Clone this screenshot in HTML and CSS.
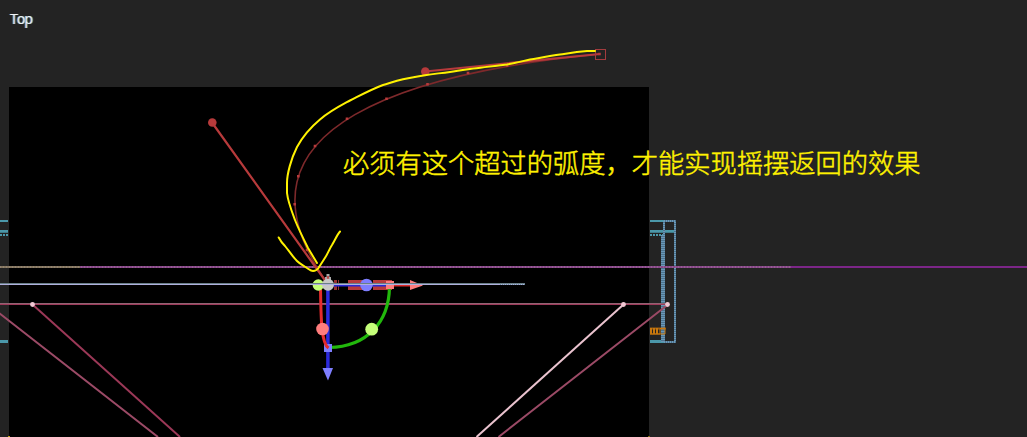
FILE: index.html
```html
<!DOCTYPE html>
<html lang="zh-CN">
<head>
<meta charset="utf-8">
<title>Top</title>
<link rel="stylesheet" href="styles.css">
</head>
<body>
<main class="viewport">
<svg class="scene" width="1027" height="437" viewBox="0 0 1027 437">
  <rect class="comp" x="9" y="87" width="640" height="350"/>
  <rect x="8" y="436" width="2" height="1" fill="#bca018"/>
  <rect x="648" y="436" width="2" height="1" fill="#806815"/>

  <!-- layer bounds on both sides of the composition -->
  <g class="teal">
    <path d="M0 221H8M650 221H664" stroke-width="2"/>
    <path d="M0 231.300H8M650 231.300H676" stroke-width="2.8"/>
    <path d="M0 235H8M650 235H664" stroke-width="2" stroke-dasharray="2 1"/>
    <path d="M0 341.500H8M650 341.500H664" stroke-width="3"/>
  </g>
  <g class="bounds">
    <path d="M664 221H675V342H664M664 221V342"/>
    <path d="M662 235V342"/>
  </g>
  <g class="bounds-dots">
    <path d="M664 221H675V342H664M664 221V342"/>
    <path d="M662 235V342"/>
  </g>
  <g stroke="#c9780d" fill="none">
    <path d="M650 328.500H666M650 334H660" stroke="#9b6013" stroke-width="2"/>
    <path d="M650 331H659" stroke-width="6" stroke-dasharray="2 1"/>
    <path d="M660 328.500H665V334H660Z"/>
  </g>

  <!-- horizontal axes -->
  <path d="M0 267H80" stroke="#85775f" stroke-width="2"/>
  <path d="M80 267H791" stroke="#88478a" stroke-width="2"/>
  <path d="M0 267H791" stroke="#b39aa2" stroke-opacity=".3" stroke-width="2" stroke-dasharray="1 2"/>
  <path d="M791 267H1027" stroke="#7c2688" stroke-width="2"/>
  <path d="M0 303.500H668" stroke="#906472"/>
  <path d="M0 304.500H668" stroke="#9e3a5b"/>

  <!-- camera frustum -->
  <g fill="none" stroke-width="2">
    <path d="M32.500 304.500L180 437" stroke="#9b3857"/>
    <path d="M-1 313L158 437M668 304.500L498.500 437" stroke="#9b4a66"/>
    <path d="M623.500 304.500L476.500 437" stroke="#eac3cf"/>
  </g>
  <g fill="#f1c7d3">
    <circle cx="32.500" cy="304.500" r="2.400"/>
    <circle cx="623.500" cy="304.500" r="2.400"/>
    <circle cx="667.500" cy="304.500" r="2.400"/>
  </g>

  <!-- motion path with its tangents -->
  <path d="M328 284C212 122 425 71 600 54" fill="none" stroke="#7d292b" stroke-width="1.600"/>
  <g fill="none" stroke="#b73a3b" stroke-width="2.200">
    <path d="M212 122.500L328 284.500M425 71.500L600 54"/>
  </g>
  <circle cx="212.300" cy="122.500" r="4.300" fill="#b73a3b"/>
  <circle cx="425.300" cy="71.500" r="4.300" fill="#b73a3b"/>
  <path class="keys" d="M507 65.500h.01M468 73h.01M427.500 84.300h.01M386.500 98.700h.01M347 118.700h.01M315 146h.01M298.300 176.300h.01M294.700 204.300h.01M307 250h.01M599.500 54h.01"/>
  <rect x="595.500" y="49.500" width="10" height="10" fill="none" stroke="#a33c3e"/>

  <!-- transform gizmo -->
  <path d="M325 280.500v-3.500h1.500v-3h3v3H331v3.500z" fill="#aaa"/>
  <path d="M327 280v-4h2v4z" fill="#b84b4b"/>
  <path d="M334 280h3v10h-3zM338 280h1v10h-1z" fill="#963031"/>
  <path d="M348 280h18v10h-18zM373 280h19v10h-19z" fill="#b73a3b"/>
  <path d="M390 285.500H411" stroke="#df2928" stroke-width="2"/>
  <path d="M333 285.500H390" stroke="#2928d8" stroke-width="2"/>
  <path d="M389.500 287C389 322 367 347 329 347.500" fill="none" stroke="#22b80c" stroke-width="3.200"/>
  <path d="M327.900 288V371" stroke="#2c2add" stroke-width="3.500"/>
  <rect x="324" y="344" width="8" height="8" fill="#7e7eff"/>
  <path d="M320.500 288C321 317 321 343 328.500 348" fill="none" stroke="#e52b2c" stroke-width="3"/>
  <circle cx="318.300" cy="285" r="5.700" fill="#c5ff79"/>
  <circle cx="328" cy="284.700" r="6" fill="#c8c8c8"/>
  <circle cx="366.500" cy="285" r="6.300" fill="#7e7eff"/>
  <rect x="386" y="281" width="8" height="8" fill="#ff7d7d"/>
  <path d="M410 280L423 285.500L410 290z" fill="#ff7d7d"/>
  <circle cx="322.500" cy="329" r="6.300" fill="#ff7d7d"/>
  <circle cx="371.700" cy="329.200" r="6.400" fill="#c5ff79"/>
  <path d="M322.500 368H333L328 380.500z" fill="#7e7eff"/>
  <path d="M0 283.500H525" stroke="#697f87"/>
  <path d="M0 284.500H525" stroke="#b0b0de"/>
  <path d="M500 284.500H525" stroke="#7190a5" stroke-dasharray="1 1"/>

  <!-- hand-drawn annotation -->
  <g class="pen">
    <path d="M595 51H587C575 52 570 53 560 54.500C550 56 539 58 530 59.500C521 61.500 515 63 507 64.500C494 66 481 67.500 470 69C462 70 457 71 450 72C440 73.500 434 73.500 425 75.200C416 77 411 77.500 403 79.300C395 81 390 83 383 85C371 89.500 361 95 350 100.500C338 107 330 111 320 119.500C311 127 303 136 297 147C291 159 287 174 287 183V193C288 202 292 212 295 220C299 230 304 240 308 248L317 263"/>
    <path d="M278.700 237.500C280 240 282 243 285 246C289 251 293 257 297 261C300 264 303 265 307 268C310 270 311 271 313 271C315 271 317 270 318.500 268C321 264 323 261 325.500 257C328 253 330 248 332 245C335 240 337 235 340 231.500"/>
  </g>
</svg>
<span class="view-name">Top</span>
<p class="note">必须有这个超过的弧度，才能实现摇摆返回的效果</p>
</main>
</body>
</html>
```
FILE: styles.css
```css
body {
  margin: 0;
  background: #232323;
  overflow: hidden;
}
.viewport {
  position: relative;
  width: 1027px;
  height: 437px;
}
.scene {
  display: block;
}
.comp {
  fill: #000;
}
.teal {
  stroke: #4b98aa;
  fill: none;
}
.bounds,
.bounds-dots {
  fill: none;
  stroke: #4d738e;
  stroke-width: 2;
}
.bounds-dots {
  stroke: #6a98b8;
  stroke-dasharray: 1 1;
}
.keys {
  stroke: #b73a3b;
  stroke-width: 2.6;
  stroke-linecap: square;
}
.pen {
  fill: none;
  stroke: #fff200;
  stroke-width: 2;
  stroke-linecap: round;
  stroke-linejoin: round;
}
.view-name {
  position: absolute;
  left: 10px;
  top: 10px;
  font: 14px/18px "Open Sans", "Noto Sans", sans-serif;
  letter-spacing: -1px;
  color: #f2f2f2;
  text-shadow: 1px 0 #4f9cc4, -1px 0 #75604c;
}
.note {
  position: absolute;
  left: 343px;
  top: 143px;
  margin: 0;
  font: 300 26.25px/38px "Noto Sans CJK SC", sans-serif;
  -webkit-text-stroke: 0.5px #fff200;
  color: #fff200;
  white-space: nowrap;
}
```
